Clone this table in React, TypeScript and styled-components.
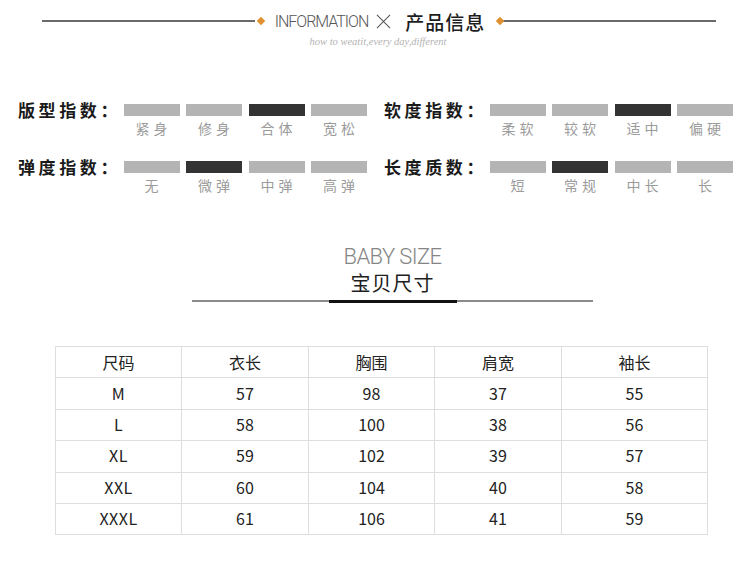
import styled, { createGlobalStyle } from "styled-components";

const GlobalStyle = createGlobalStyle`
  html, body {
    margin: 0;
    padding: 0;
    background: #fff;
  }
  body {
    font-family: "Noto Sans CJK SC", "Noto Sans", sans-serif;
    color: #222;
  }
`;

type IndexRow = {
  title: string;
  options: string[];
  active: number;
};

const indexRows: IndexRow[] = [
  { title: "版型指数：", options: ["紧身", "修身", "合体", "宽松"], active: 2 },
  { title: "软度指数：", options: ["柔软", "较软", "适中", "偏硬"], active: 2 },
  { title: "弹度指数：", options: ["无", "微弹", "中弹", "高弹"], active: 1 },
  { title: "长度质数：", options: ["短", "常规", "中长", "长"], active: 1 },
];

const sizeHead = ["尺码", "衣长", "胸围", "肩宽", "袖长"];
const sizeRows = [
  ["M", "57", "98", "37", "55"],
  ["L", "58", "100", "38", "56"],
  ["XL", "59", "102", "39", "57"],
  ["XXL", "60", "104", "40", "58"],
  ["XXXL", "61", "106", "41", "59"],
];
const colWidths = [126, 127, 126, 127, 146];

const App = () => {
  return (
    <>
      <GlobalStyle />
      <Page>
        <Header>
          <HeaderLine />
          <Diamond />
          <EnTitle>INFORMATION</EnTitle>
          <Cross viewBox="0 0 16 16">
            <path d="M1 1 L15 15 M15 1 L1 15" stroke="#555" strokeWidth="1.1" fill="none" />
          </Cross>
          <CnTitle>产品信息</CnTitle>
          <Diamond $right />
          <HeaderLine />
        </Header>
        <Tagline>how to weatit,every day,different</Tagline>

        <IndexGrid>
          {indexRows.map((row) => (
            <IndexGroup key={row.title}>
              <IndexLabel>{row.title}</IndexLabel>
              {row.options.map((opt, i) => (
                <Bar key={opt + "bar"} $active={i === row.active} />
              ))}
              <Spacer />
              {row.options.map((opt) => (
                <OptionText key={opt}>{opt}</OptionText>
              ))}
            </IndexGroup>
          ))}
        </IndexGrid>

        <SizeTitle>
          <SizeEn>BABY SIZE</SizeEn>
          <SizeCn>宝贝尺寸</SizeCn>
          <Divider>
            <DividerThin />
            <DividerThick />
            <DividerThin />
          </Divider>
        </SizeTitle>

        <SizeTable>
          <colgroup>
            {colWidths.map((w, i) => (
              <col key={i} style={{ width: w }} />
            ))}
          </colgroup>
          <thead>
            <tr>
              {sizeHead.map((h) => (
                <HeadCell key={h}>{h}</HeadCell>
              ))}
            </tr>
          </thead>
          <tbody>
            {sizeRows.map((r) => (
              <tr key={r[0]}>
                {r.map((v, i) => (
                  <Cell key={i} $size={i === 0}>
                    {v}
                  </Cell>
                ))}
              </tr>
            ))}
          </tbody>
        </SizeTable>
      </Page>
    </>
  );
};

const Page = styled.div`
  width: 750px;
  height: 575px;
  overflow: hidden;
  background: #fff;
`;

const Header = styled.div`
  display: flex;
  align-items: center;
  height: 24px;
  margin-top: 9px;
  padding: 0 34px 0 42px;
`;

const HeaderLine = styled.div`
  flex: 1;
  height: 2px;
  background: #6a6a6a;
`;

const Diamond = styled.div<{ $right?: boolean }>`
  width: 6px;
  height: 6px;
  background: #e0912f;
  transform: rotate(45deg);
  margin: ${(p) => (p.$right ? "0 0 0 12px" : "0 0 0 3px")};
`;

const EnTitle = styled.span`
  font-family: Roboto, "Liberation Sans", sans-serif;
  font-weight: 300;
  font-size: 16px;
  letter-spacing: -1px;
  color: #555;
  margin-left: 11px;
`;

const Cross = styled.svg`
  width: 15px;
  height: 15px;
  margin-left: 8px;
`;

const CnTitle = styled.span`
  font-size: 19px;
  font-weight: 500;
  color: #1d1d1d;
  margin-left: 14px;
  letter-spacing: 1px;
`;

const Tagline = styled.div`
  text-align: center;
  font-family: "Liberation Serif", serif;
  font-style: italic;
  font-size: 10.5px;
  line-height: 12px;
  color: #b3b3b3;
  padding-left: 6px;
  margin-top: 3px;
`;

const IndexGrid = styled.div`
  display: grid;
  grid-template-columns: repeat(2, auto);
  justify-content: start;
  column-gap: 17px;
  row-gap: 21px;
  margin-top: 53px;
  padding-left: 18px;
`;

const IndexGroup = styled.div`
  display: grid;
  grid-template-columns: 99px repeat(4, 56px);
  grid-template-rows: 18px 18px;
  column-gap: 6.5px;
  align-items: center;
`;

const IndexLabel = styled.div`
  font-size: 17px;
  font-weight: 700;
  letter-spacing: 3.6px;
  color: #1a1a1a;
  line-height: 18px;
  white-space: nowrap;
`;

const Bar = styled.div<{ $active: boolean }>`
  height: 12px;
  background: ${(p) => (p.$active ? "#333333" : "#b4b4b4")};
`;

const Spacer = styled.div``;

const OptionText = styled.div`
  text-align: center;
  font-size: 14px;
  line-height: 18px;
  color: #9b9b9b;
  letter-spacing: 4px;
  padding-left: 4px;
  white-space: nowrap;
`;

const SizeTitle = styled.div`
  width: 401px;
  margin: 51px 0 0 192px;
  display: flex;
  flex-direction: column;
  align-items: center;
`;

const SizeEn = styled.div`
  font-family: Roboto, "Liberation Sans", sans-serif;
  font-weight: 300;
  font-size: 22px;
  line-height: 24px;
  letter-spacing: -0.6px;
  color: #858585;
`;

const SizeCn = styled.div`
  font-size: 20px;
  line-height: 28px;
  color: #1e1e1e;
  letter-spacing: 1px;
`;

const Divider = styled.div`
  width: 100%;
  height: 4px;
  margin-top: 2px;
  display: flex;
  align-items: center;
`;

const DividerThin = styled.div`
  flex: 1;
  height: 1.5px;
  background: #8a8a8a;
`;

const DividerThick = styled.div`
  width: 128px;
  height: 3px;
  background: #111;
`;

const SizeTable = styled.table`
  margin: 43px 0 0 55px;
  width: 652px;
  border-collapse: collapse;
  table-layout: fixed;

  tr {
    height: 31.4px;
  }
`;

const HeadCell = styled.th`
  border: 1px solid #dedede;
  font-weight: 400;
  font-size: 16px;
  color: #222;
  text-align: center;
  padding: 0;
`;

const Cell = styled.td<{ $size: boolean }>`
  border: 1px solid #dedede;
  font-size: 16px;
  color: #222;
  text-align: center;
  padding: 0 0 2px;
  letter-spacing: ${(p) => (p.$size ? "0.5px" : "0")};
`;

export default App;
